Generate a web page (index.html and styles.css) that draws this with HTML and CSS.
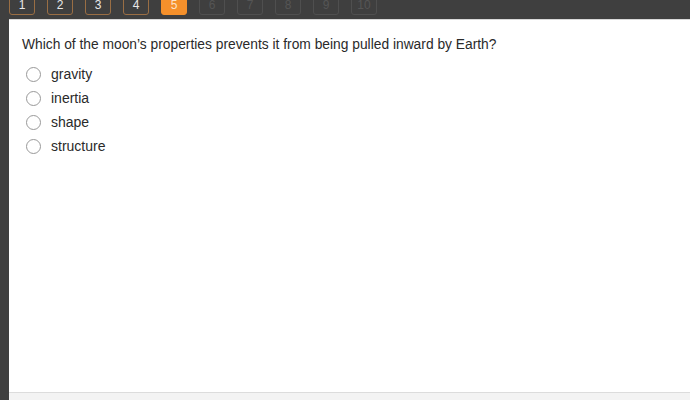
FILE: index.html
```html
<!DOCTYPE html>
<html lang="en">
  <head>
    <meta charset="UTF-8">
    <title>Question 5</title>
    <link rel="stylesheet" href="styles.css">
  </head>
  <body>
    <nav class="pager">
      <span class="tab done">1</span>
      <span class="tab done">2</span>
      <span class="tab done">3</span>
      <span class="tab done">4</span>
      <span class="tab current">5</span>
      <span class="tab">6</span>
      <span class="tab">7</span>
      <span class="tab">8</span>
      <span class="tab">9</span>
      <span class="tab">10</span>
    </nav>
    <main class="sheet">
      <section class="question">
        <p class="prompt">Which of the moon’s properties prevents it from being pulled inward by Earth?</p>
        <ul class="choices">
          <li><span class="radio"></span>gravity</li>
          <li><span class="radio"></span>inertia</li>
          <li><span class="radio"></span>shape</li>
          <li><span class="radio"></span>structure</li>
        </ul>
      </section>
      <footer class="sheet-foot"></footer>
    </main>
  </body>
</html>
```

FILE: styles.css
```css
* {
  box-sizing: border-box;
}
html, body {
  height: 100%;
}
body {
  margin: 0;
  background: #3f3f3f;
  font-family: "Liberation Sans", Arial, sans-serif;
  color: #2a2a2a;
  display: flex;
  flex-direction: column;
  overflow: hidden;
}
.pager {
  display: flex;
  gap: 12px;
  height: 19px;
  padding-left: 9px;
  align-items: flex-end;
  padding-bottom: 4px;
}
.tab {
  width: 26px;
  height: 26px;
  flex: none;
  border: 1px solid #4f4f4f;
  border-radius: 3px;
  color: #555;
  font-size: 12px;
  display: flex;
  align-items: flex-end;
  justify-content: center;
  padding-bottom: 2px;
}
.tab.done {
  border-color: #9a6e44;
  color: #e8e8e8;
}
.tab.current {
  background: #f5902b;
  border-color: #f5902b;
  color: #fde3c8;
}
.sheet {
  flex: 1;
  margin-left: 9px;
  background: #fff;
  border-top: 1px solid #d8d8d8;
  display: flex;
  flex-direction: column;
}
.question {
  flex: 1;
  padding: 16px 13px 0;
}
.prompt {
  margin: 0 0 8px;
  font-size: 13.8px;
  line-height: 18px;
}
.choices {
  list-style: none;
  margin: 0;
  padding: 0 0 0 3px;
}
.choices li {
  display: flex;
  align-items: center;
  height: 24px;
  font-size: 14px;
}
.radio {
  width: 15px;
  height: 15px;
  border: 1.5px solid #999;
  border-radius: 50%;
  margin-left: 1px;
  margin-right: 10px;
}
.sheet-foot {
  height: 8px;
  border-top: 1px solid #dcdcdc;
  background: #f3f3f3;
}
```
